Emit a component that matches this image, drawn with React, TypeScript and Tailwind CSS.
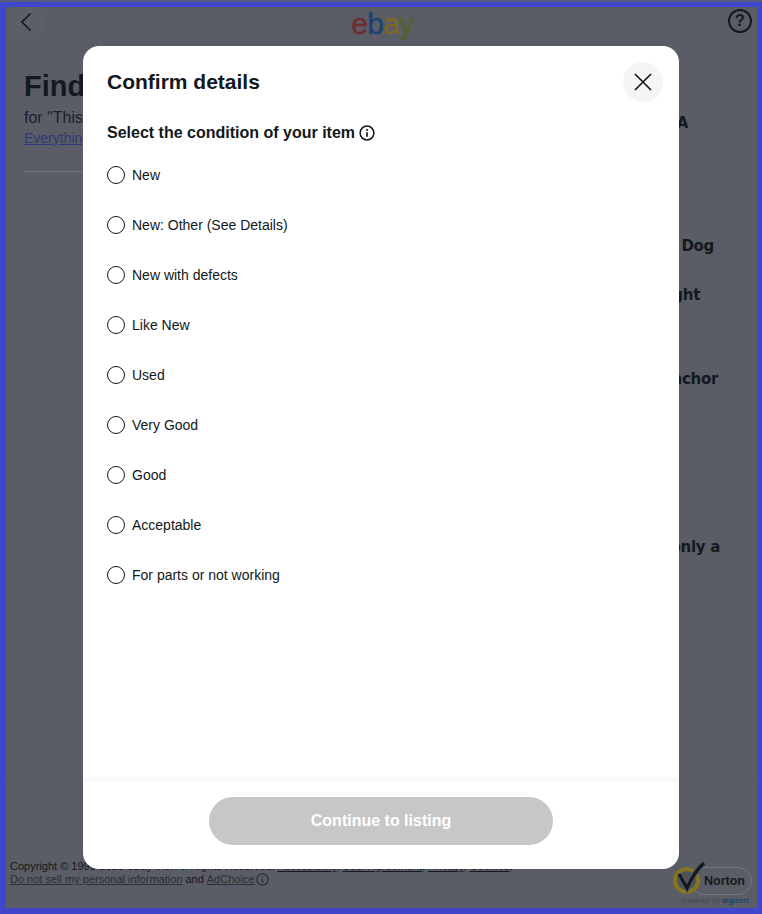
import { useState } from "react"

const conditions = [
  "New",
  "New: Other (See Details)",
  "New with defects",
  "Like New",
  "Used",
  "Very Good",
  "Good",
  "Acceptable",
  "For parts or not working",
]

function InfoIcon({ className }: { className: string }) {
  return (
    <svg viewBox="0 0 16 16" className={className} fill="none" stroke="currentColor">
      <circle cx="8" cy="8" r="6.9" strokeWidth="1.5" />
      <circle cx="8" cy="4.9" r="1" fill="currentColor" stroke="none" />
      <path d="M8 7.2v4.6" strokeWidth="1.7" />
    </svg>
  )
}

function NortonBadge() {
  return (
    <div className="relative h-[44px] w-[84px] shrink-0">
      <div className="absolute left-[17px] top-[6px] h-[28px] w-[62px] rounded-full border border-[#74777d]" />
      <svg viewBox="0 0 40 44" className="absolute left-0 top-0 h-[44px] w-[40px]">
        <circle cx="13.5" cy="19.5" r="11.5" fill="#4e5158" stroke="#86751f" strokeWidth="4" />
        <path d="M6 13l8 14C18 18 23 9 31 2" fill="none" stroke="#5a5d65" strokeWidth="5.5" />
        <path d="M6 13l8 14C18 18 23 9 31 2" fill="none" stroke="#14181f" strokeWidth="3.5" />
      </svg>
      <span className="absolute left-[31px] top-[11px] text-[12.5px] leading-[18px] font-bold text-[#16191f]">
        Norton
      </span>
      <span className="absolute left-[8px] top-[35px] whitespace-nowrap text-[7.5px] leading-[9px] text-[#44474e]">
        powered by <span className="font-bold text-[#1c4460]">digicert</span>
      </span>
    </div>
  )
}

export default function App() {
  const [condition, setCondition] = useState("")

  return (
    <div className="relative flex h-[914px] w-[762px] flex-col overflow-hidden bg-[#5a5d65] font-['Liberation_Sans',Arial,sans-serif] text-[#111820]">
      <div className="h-[2px] bg-[#565a7c]" />

      {/* Page behind the dialog */}
      <div className="flex flex-1 flex-col border-t-[5px] border-r-[5px] border-b-[6px] border-l-[6px] border-[#4147cc]">
        <header className="flex h-[38px] items-start justify-between pr-[5px]">
          <div className="ml-[1px] h-[34px] w-[38px] overflow-hidden">
            <div className="-mt-[4px] flex h-[38px] w-[38px] items-center justify-center rounded-full bg-[#5c5f66]">
              <svg viewBox="0 0 12 20" className="h-[20px] w-[12px]" fill="none" stroke="#14181f" strokeWidth="1.6">
                <path d="M10.5 1.5 2 10l8.5 8.5" />
              </svg>
            </div>
          </div>
          <div className="-ml-[8px] flex text-[30px] leading-[34px] tracking-[-0.7px] [-webkit-text-stroke:0.4px]">
            <span className="text-[#6f2a32]">e</span>
            <span className="text-[#1a4272]">b</span>
            <span className="text-[#7c6826]">a</span>
            <span className="text-[#4f6428]">y</span>
          </div>
          <div className="mt-[2px] flex h-[24px] w-[24px] items-center justify-center rounded-full border-2 border-[#14181f] text-[16px] leading-none font-bold text-[#14181f]">
            ?
          </div>
        </header>

        <main className="flex flex-1">
          <div className="w-[300px] pl-[18px]">
            <h1 className="mt-[23px] text-[29px] leading-[36px] font-bold text-[#14181f]">Find</h1>
            <p className="mt-[4px] text-[16px] leading-[20px] text-[#1c2027]">for "This</p>
            <a className="block text-[14px] leading-[20px] text-[#2c3b78] underline">Everything</a>
            <div className="mt-[23px] h-px w-[200px] bg-[#6e7178]" />
          </div>
          <div className="flex-1 font-['DejaVu_Sans',sans-serif] text-[15px] leading-[20px] font-bold tracking-[-0.3px] text-[#14181f]">
            <p className="mt-[68px] pr-[69px] text-right">A</p>
            <p className="mt-[103px] pr-[43px] text-right">Dog</p>
            <p className="mt-[29px] pr-[57px] text-right">ght</p>
            <p className="mt-[64px] pr-[39px] text-right">nchor</p>
            <p className="mt-[148px] pr-[37px] text-right">only a</p>
          </div>
        </main>

        <footer className="flex h-[130px] items-start justify-between border-t border-[#565960] pl-[4px]">
          <div className="mt-[81px] text-[11px] leading-[13px] text-[#14181f]">
            <p className="whitespace-nowrap">
              Copyright © 1995-2023 eBay Inc. All Rights Reserved. <u>Accessibility</u>, <u>User Agreement</u>, <u>Privacy</u>, <u>Cookies</u>,
            </p>
            <p className="flex items-center whitespace-nowrap">
              <u className="text-[#2a2e36]">Do not sell my personal information</u>
              <span className="mx-[3px]">and</span>
              <u className="text-[#2a2e36]">AdChoice</u>
              <InfoIcon className="ml-[2px] h-[13px] w-[13px] text-[#2a2e36]" />
            </p>
          </div>
          <div className="mt-[82px]">
            <NortonBadge />
          </div>
        </footer>
      </div>

      {/* Dialog */}
      <div className="absolute left-[83px] top-[46px] flex h-[823px] w-[596px] flex-col rounded-2xl bg-white">
        <div className="flex h-[72px] items-start justify-between pt-[16px] pr-[16px] pl-[24px]">
          <h2 className="mt-[5px] text-[21px] leading-[30px] font-bold text-[#111820]">Confirm details</h2>
          <button className="flex h-[40px] w-[40px] items-center justify-center rounded-full bg-[#f5f5f5]">
            <svg viewBox="0 0 20 20" className="h-[20px] w-[20px]" fill="none" stroke="#111820" strokeWidth="1.7">
              <path d="M2 2l16 16M18 2 2 18" />
            </svg>
          </button>
        </div>

        <div className="flex-1 px-[24px]">
          <div className="mt-[5px] flex h-[20px] items-center text-[16px] font-bold">
            Select the condition of your item
            <InfoIcon className="ml-[4px] h-[16px] w-[16px]" />
          </div>
          <div className="mt-[7px] flex flex-col">
            {conditions.map((c) => (
              <label key={c} className="flex h-[50px] cursor-pointer items-center gap-[7px] text-[14px]" onClick={() => setCondition(c)}>
                <span className={`h-[18px] w-[18px] rounded-full border border-[#111820] ${condition === c ? "bg-[#111820]" : "bg-white"}`} />
                {c}
              </label>
            ))}
          </div>
        </div>

        <div className="flex h-[88px] justify-center pt-[16px] shadow-[0_-2px_4px_rgba(0,0,0,0.05)]">
          <button disabled className="h-[48px] w-[344px] rounded-3xl bg-[#c7c7c7] text-[16px] font-bold text-white">
            Continue to listing
          </button>
        </div>
      </div>
    </div>
  )
}
